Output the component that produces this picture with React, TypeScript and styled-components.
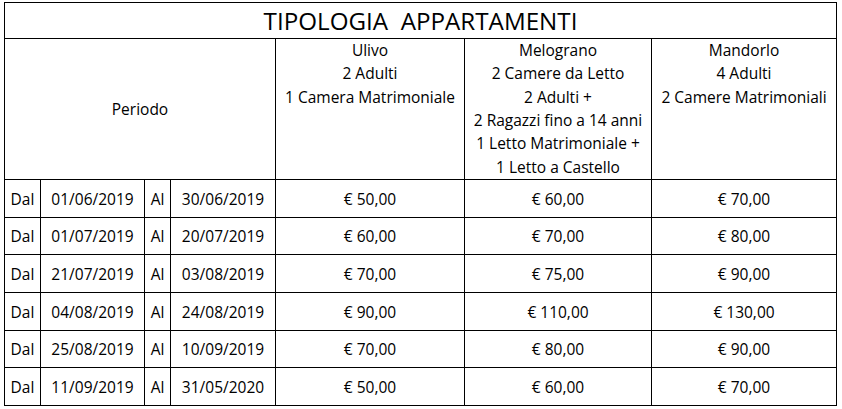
import React from 'react';
import styled, { createGlobalStyle } from 'styled-components';

const GlobalStyle = createGlobalStyle`
  html, body {
    margin: 0;
    padding: 0;
    background: #ffffff;
  }
  body {
    font-family: "Open Sans", Lato, sans-serif;
    color: #000000;
  }
`;

const Page = styled.div`
  padding: 2px 0 0 4px;
`;

const Sheet = styled.div`
  display: grid;
  grid-template-columns: 35px 103px 25px 104px 188px 186px 184px;
  grid-template-rows: 35px 140px 37px 36px 37px 37px 36px 37px;
  gap: 1px;
  padding: 1px;
  width: max-content;
  background: #000000;
`;

const Cell = styled.div<{ $span?: number }>`
  grid-column: span ${(p) => p.$span ?? 1};
  background: #ffffff;
  display: flex;
  align-items: center;
  justify-content: center;
  font-size: 15.5px;
  white-space: nowrap;
`;

const TitleCell = styled(Cell)`
  font-size: 24.2px;
  white-space: pre;
`;

const HeadCell = styled(Cell)`
  flex-direction: column;
  justify-content: flex-start;
  line-height: 23.33px;
`;

const rooms = [
  ['Ulivo', '2 Adulti', '1 Camera Matrimoniale'],
  [
    'Melograno',
    '2 Camere da Letto',
    '2 Adulti +',
    '2 Ragazzi fino a 14 anni',
    '1 Letto Matrimoniale +',
    '1 Letto a Castello',
  ],
  ['Mandorlo', '4 Adulti', '2 Camere Matrimoniali'],
];

const periods = [
  ['01/06/2019', '30/06/2019', '50,00', '60,00', '70,00'],
  ['01/07/2019', '20/07/2019', '60,00', '70,00', '80,00'],
  ['21/07/2019', '03/08/2019', '70,00', '75,00', '90,00'],
  ['04/08/2019', '24/08/2019', '90,00', '110,00', '130,00'],
  ['25/08/2019', '10/09/2019', '70,00', '80,00', '90,00'],
  ['11/09/2019', '31/05/2020', '50,00', '60,00', '70,00'],
];

export default function App() {
  return (
    <Page>
      <GlobalStyle />
      <Sheet>
        <TitleCell $span={7}>{'TIPOLOGIA  APPARTAMENTI'}</TitleCell>
        <Cell $span={4}>Periodo</Cell>
        {rooms.map((lines) => (
          <HeadCell key={lines[0]}>
            {lines.map((l) => (
              <span key={l}>{l}</span>
            ))}
          </HeadCell>
        ))}
        {periods.map(([from, to, a, b, c]) => (
          <React.Fragment key={from}>
            <Cell>Dal</Cell>
            <Cell>{from}</Cell>
            <Cell>Al</Cell>
            <Cell>{to}</Cell>
            <Cell>€ {a}</Cell>
            <Cell>€ {b}</Cell>
            <Cell>€ {c}</Cell>
          </React.Fragment>
        ))}
      </Sheet>
    </Page>
  );
}
